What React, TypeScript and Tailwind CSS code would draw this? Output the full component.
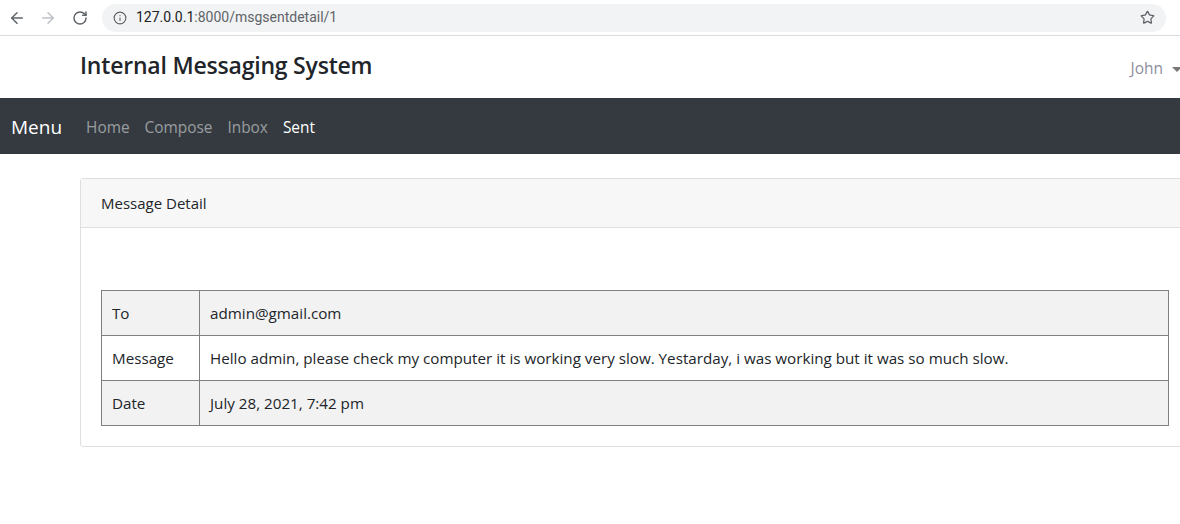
import { ArrowLeft, ArrowRight, RotateCw, Info, Star } from 'lucide-react';

const rows = [
  { label: 'To', value: 'admin@gmail.com' },
  { label: 'Message', value: 'Hello admin, please check my computer it is working very slow. Yestarday, i was working but it was so much slow.' },
  { label: 'Date', value: 'July 28, 2021, 7:42 pm' },
];

const links = [
  { name: 'Home', active: false },
  { name: 'Compose', active: false },
  { name: 'Inbox', active: false },
  { name: 'Sent', active: true },
];

function BrowserBar() {
  return (
    <div className="flex h-9 items-center border-b border-[#dadce0] bg-white">
      <div className="flex items-center">
        <ArrowLeft size={18} strokeWidth={2} className="ml-[8px] text-[#5f6368]" />
        <ArrowRight size={18} strokeWidth={2} className="ml-[13px] text-[#bdc1c6]" />
        <RotateCw size={16} strokeWidth={2.2} className="ml-[15px] text-[#5f6368]" />
      </div>
      <div className="ml-[14px] flex h-[28px] w-[1064px] items-center rounded-full bg-[#f1f3f4]">
        <Info size={14} strokeWidth={2} className="ml-[11px] text-[#5f6368]" />
        <span className="ml-[9px] text-[14px] text-[#5f6368]">
          <span className="text-[#202124]">127.0.0.1</span>:8000/msgsentdetail/1
        </span>
        <Star size={15} strokeWidth={2} className="ml-auto mr-[11px] text-[#5f6368]" />
      </div>
    </div>
  );
}

export default function App() {
  return (
    <div className="h-[524px] w-[1180px] overflow-hidden bg-white font-['Open_Sans',sans-serif] text-[#212529]">
      <div className="font-['Roboto',sans-serif]">
        <BrowserBar />
      </div>
      <div className="w-[1200px]">
        <header className="flex h-[62px] items-center justify-between pb-[4px] pl-[80px] pr-[18px]">
          <h1 className="text-[23px] font-semibold tracking-[-0.2px]">Internal Messaging System</h1>
          <div className="flex items-center pt-[8px] text-[15.5px] text-[#8e8ea0]">
            John
            <span className="ml-[9px] h-0 w-0 border-x-[5px] border-t-[5px] border-x-transparent border-t-[#777]" />
          </div>
        </header>
        <nav className="flex h-[56px] items-center bg-[#343a40] px-[11px] pt-[2px]">
          <span className="mr-[24px] text-[19px] text-white">Menu</span>
          <ul className="flex gap-[15px] pt-[2px] text-[15.4px]">
            {links.map((l) => (
              <li key={l.name} className={l.active ? 'text-white' : 'text-white/50'}>
                {l.name}
              </li>
            ))}
          </ul>
        </nav>
        <main className="pl-[80px] pt-[24px]">
          <div className="w-[1110px] rounded-[3px] border border-[#dfdfdf]">
            <div className="flex h-[49px] items-center border-b border-[#dfdfdf] bg-[#f7f7f7] px-[20px] text-[15px]">
              Message Detail
            </div>
            <div className="px-[20px] pb-[20px] pt-[62px]">
              <table className="w-[1068px] border-collapse text-[15.2px]">
                <tbody>
                  {rows.map((r, i) => (
                    <tr key={r.label} className={i % 2 === 0 ? 'bg-[#f2f2f2]' : 'bg-white'}>
                      <td className="h-[45px] w-[98px] border border-[#808080] px-[10px]">{r.label}</td>
                      <td className="h-[45px] border border-[#808080] px-[10px]">{r.value}</td>
                    </tr>
                  ))}
                </tbody>
              </table>
            </div>
          </div>
        </main>
      </div>
    </div>
  );
}
